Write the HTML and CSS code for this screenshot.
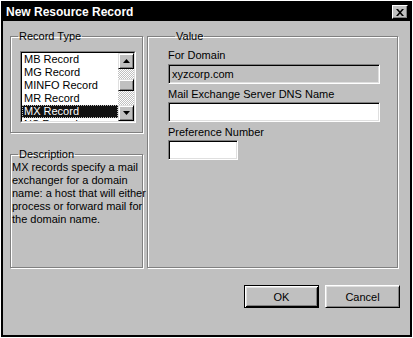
FILE: index.html
```html
<!DOCTYPE html>
<html lang="en">
<head>
    <meta charset="UTF-8">
    <title>New Resource Record</title>
    <link rel="stylesheet" href="styles.css">
</head>
<body>

    <div class="window">
        <div class="titlebar">
            <span class="title">New Resource Record</span>
            <span class="close">
                <svg width="8" height="7" viewBox="0 0 8 7"><path d="M0 0h2l2 2.3 2-2.3h2l-3 3.5 3 3.5h-2l-2-2.3-2 2.3h-2l3-3.5z" fill="#000"/></svg>
            </span>
        </div>

        <div class="content">
            <div class="groups">
                <fieldset class="group group-type">
                    <legend>Record Type</legend>
                    <div class="listbox">
                        <div class="listbox-inner">
                            <ul class="items">
                                <li>MB Record</li>
                                <li>MG Record</li>
                                <li>MINFO Record</li>
                                <li>MR Record</li>
                                <li class="selected">MX Record</li>
                                <li>NS Record</li>
                            </ul>
                            <div class="scrollbar">
                                <div class="sb-btn">
                                    <svg width="7" height="4" viewBox="0 0 7 4"><path d="M3.5 0L7 4H0z" fill="#000"/></svg>
                                </div>
                                <div class="sb-track"><div class="sb-thumb"></div></div>
                                <div class="sb-btn">
                                    <svg width="7" height="4" viewBox="0 0 7 4"><path d="M0 0h7L3.5 4z" fill="#000"/></svg>
                                </div>
                            </div>
                        </div>
                    </div>
                </fieldset>

                <fieldset class="group group-desc">
                    <legend>Description</legend>
                    <p class="desc">MX records specify a mail<br>exchanger for a domain<br>name: a host that will either<br>process or forward mail for<br>the domain name.</p>
                </fieldset>

                <fieldset class="group group-value">
                    <legend>Value</legend>
                    <div class="field-label first">For Domain</div>
                    <div class="field field-readonly">xyzcorp.com</div>
                    <div class="field-label">Mail Exchange Server DNS Name</div>
                    <div class="field"></div>
                    <div class="field-label">Preference Number</div>
                    <div class="field field-small"></div>
                </fieldset>
            </div>

            <div class="buttons">
                <button class="btn btn-default">OK</button>
                <button class="btn">Cancel</button>
            </div>
        </div>
    </div>

</body>
</html>
```

FILE: styles.css
```css
body {
    margin: 0;
    background-color: #fff;
    font-family: "Liberation Sans", Arial, sans-serif;
    font-size: 11px;
    color: #000;
}
.window {
    margin: 1px 0 0 1px;
    width: 411px;
    height: 336px;
    box-sizing: border-box;
    border: 2px solid #000;
    background-color: #c0c0c0;
}
.titlebar {
    height: 18px;
    background-color: #000;
    display: flex;
    align-items: center;
    justify-content: space-between;
    padding: 0 2px 0 3px;
}
.title {
    color: #fff;
    font-weight: bold;
    font-size: 12px;
}
.close {
    width: 16px;
    height: 14px;
    box-sizing: border-box;
    background-color: #c0c0c0;
    border: 1px solid;
    border-color: #fff #000 #000 #fff;
    box-shadow: inset -1px -1px 0 #808080;
    display: flex;
    align-items: center;
    justify-content: center;
}
.content {
    padding: 9px 10px 0 7px;
}
.groups {
    display: grid;
    grid-template-columns: 133px 251px;
    grid-template-rows: 103px 120px;
    column-gap: 4px;
    row-gap: 15px;
}
.group {
    margin: 0;
    padding: 0;
    min-width: 0;
    box-sizing: border-box;
    border: 1px solid #808080;
    box-shadow: 1px 1px 0 #fff, inset 1px 1px 0 #fff;
}
.group legend {
    margin-left: 7px;
    padding: 0 1px;
    line-height: 13px;
}
.group-value {
    grid-column: 2;
    grid-row: 1 / 3;
    padding-left: 20px;
}

/* list box */
.listbox {
    margin: 8px 0 0 9px;
    width: 116px;
    height: 72px;
    box-sizing: border-box;
    border: 1px solid;
    border-color: #808080 #fff #fff #808080;
}
.listbox-inner {
    height: 100%;
    box-sizing: border-box;
    border: 1px solid;
    border-color: #000 #dfdfdf #dfdfdf #000;
    background-color: #fff;
    display: flex;
    overflow: hidden;
}
.items {
    list-style: none;
    margin: 0;
    padding: 0;
    flex: 1;
    overflow: hidden;
}
.items li {
    height: 13px;
    line-height: 13px;
    padding-left: 2px;
    white-space: nowrap;
}
.items li.selected {
    background-color: #111;
    color: #fff;
    outline: 1px dotted #c0c0c0;
    outline-offset: -1px;
}
.scrollbar {
    width: 16px;
    display: flex;
    flex-direction: column;
}
.sb-btn {
    height: 16px;
    box-sizing: border-box;
    background-color: #c0c0c0;
    border: 1px solid;
    border-color: #dfdfdf #000 #000 #dfdfdf;
    box-shadow: inset 1px 1px 0 #fff, inset -1px -1px 0 #808080;
    display: flex;
    align-items: center;
    justify-content: center;
}
.sb-track {
    flex: 1;
    background: repeating-conic-gradient(#fff 0 25%, #c0c0c0 0 50%) 0 0 / 2px 2px;
}
.sb-thumb {
    margin-top: 10px;
    height: 12px;
    box-sizing: border-box;
    background-color: #c0c0c0;
    border: 1px solid;
    border-color: #dfdfdf #000 #000 #dfdfdf;
    box-shadow: inset 1px 1px 0 #fff, inset -1px -1px 0 #808080;
}

/* description */
.desc {
    margin: 0;
    padding-left: 1px;
    line-height: 13px;
    white-space: nowrap;
}

/* value fields */
.field-label {
    line-height: 13px;
    margin-top: 4px;
}
.field-label.first {
    margin-top: 6px;
}
.field-label + .field {
    margin-top: 1px;
}
.field-label.first + .field {
    margin-top: 2px;
}
.field {
    width: 212px;
    height: 20px;
    box-sizing: border-box;
    border: 1px solid;
    border-color: #808080 #fff #fff #808080;
    box-shadow: inset 1px 1px 0 #000, inset -1px -1px 0 #dfdfdf;
    background-color: #fff;
    padding: 0 3px;
    line-height: 18px;
}
.field-readonly {
    background-color: #c0c0c0;
}
.field-small {
    width: 70px;
}

/* buttons */
.buttons {
    margin-top: 17px;
    display: flex;
    justify-content: flex-end;
    gap: 6px;
}
.btn {
    width: 75px;
    height: 23px;
    box-sizing: border-box;
    font-family: "Liberation Sans", Arial, sans-serif;
    font-size: 11px;
    color: #000;
    background-color: #c0c0c0;
    border: 1px solid;
    border-color: #fff #000 #000 #fff;
    box-shadow: inset 1px 1px 0 #dfdfdf, inset -1px -1px 0 #808080;
    padding: 0;
}
.btn-default {
    border-color: #000;
    box-shadow: inset 1px 1px 0 #fff, inset -1px -1px 0 #000, inset 2px 2px 0 #dfdfdf, inset -2px -2px 0 #808080;
}
```
